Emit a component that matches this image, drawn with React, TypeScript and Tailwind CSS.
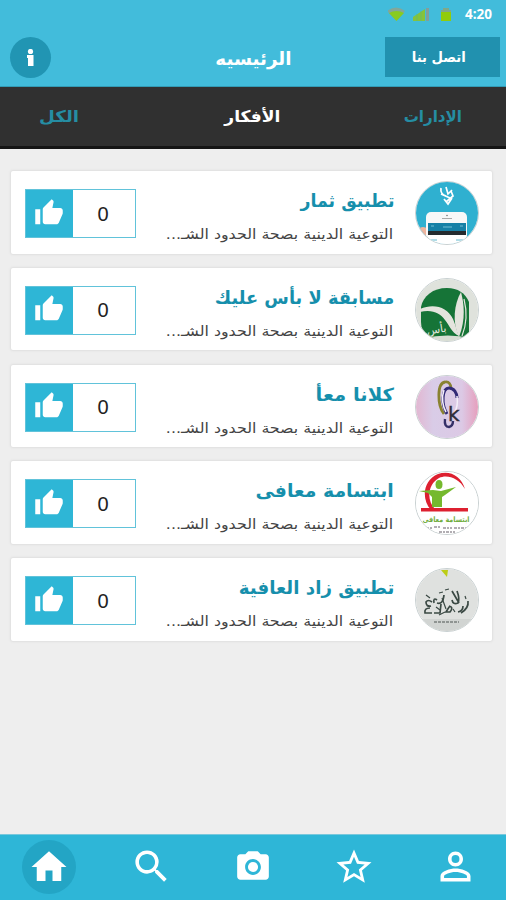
import type { ReactNode } from 'react'
import { MdHome, MdPersonOutline, MdPhotoCamera, MdSearch, MdThumbUp } from 'react-icons/md'

interface Idea {
  title: string
  titleClass: string
  votes: number
  logo: ReactNode
}

const SUMMARY = 'التوعية الدينية بصحة الحدود الشـ...'

function PhoneLogo() {
  return (
    <svg viewBox="0 0 64 64" className="size-16">
      <rect width="64" height="64" fill="#2fb0d0" />
      <path d="M27 6q-1 6 5 8M32 5l2 7 4-4M27 12l9 4M37 9l2 5-7 6M30 17l4 5 4-6" fill="none" stroke="#fff" strokeWidth="1.7" />
      <path d="M4 47q5-4 10 0v14H7z" fill="#eeb49d" />
      <rect x="12" y="30" width="41" height="40" rx="5" fill="#f8f8f8" />
      <path d="M28 36.500h10" stroke="#aaa" strokeWidth="1.200" />
      <circle cx="33" cy="33.500" r=".8" fill="#777" />
      <rect x="14" y="41" width="38" height="8" fill="#1680a6" />
      <rect x="14" y="49" width="38" height="4" fill="#242b2f" />
      <path d="M29 45h9M46 44h3M17 44h3" stroke="#70bed5" />
      <rect x="14" y="53" width="38" height="12" fill="#fff" />
      <path d="M17 58h6M42 58h7" stroke="#62b9ce" />
    </svg>
  )
}

function LeafLogo() {
  return (
    <svg viewBox="0 0 64 64" className="size-16">
      <rect width="64" height="64" fill="#dfe2dc" />
      <path d="M7 28C9 17 19 9 33 9c11 0 18 5 22 14v36H15Q7 54 7 43z" fill="#167437" />
      <path d="M6 30c14-6 27-2 33 10 3 7 4 13 6 17-8-4-9-10-14-16C26 34 18 30 6 33z" fill="#e4e4dd" />
      <path d="M45 58c-7-14-5-33 2-45 3 12 5 27-2 45z" fill="#e4e4dd" />
      <path d="M50 20q5 20-2 37" fill="none" stroke="#e4e4dd" strokeWidth="1.2" />
      <path d="M9 59q26-5 47 0v5H9z" fill="#d8ddd3" />
      <text x="23" y="54" fill="#e5e8df" fontSize="11" textAnchor="middle" direction="rtl" transform="rotate(-8 23 54)">بأس</text>
    </svg>
  )
}

function LoopLogo() {
  return (
    <svg viewBox="0 0 64 64" className="size-16">
      <defs>
        <linearGradient id="pinkShade">
          <stop offset="0" stopColor="#e3b5cf" />
          <stop offset=".3" stopColor="#d9cce7" />
          <stop offset=".75" stopColor="#dcc9e5" />
          <stop offset="1" stopColor="#e69fbd" />
        </linearGradient>
      </defs>
      <rect width="64" height="64" fill="url(#pinkShade)" />
      <path d="M30 38C23 29 23 7 31 6c4-1 6 3 6 6" fill="none" stroke="#898231" strokeWidth="2.8" />
      <path d="M33 38C27 28 28 12 35 12c5 0 8 5 8 10" fill="none" stroke="#332b76" strokeWidth="3" />
      <path d="M43 20c1 7 0 13-3 17M30 14c-3 8-1 17 2 22" fill="none" stroke="#f4eff9" strokeWidth="1.5" />
      <path d="M31 43q-1 8 4 8 4-1 4-6" fill="none" stroke="#342f67" strokeWidth="2.4" />
      <text x="34" y="45" direction="ltr" fontSize="20" fill="#302d3b" stroke="#302d3b" strokeWidth=".4">k</text>
    </svg>
  )
}

function SmileLogo() {
  return (
    <svg viewBox="0 0 64 64" className="size-16">
      <rect width="64" height="64" fill="#fff" />
      <path d="M17 38C7 27 9 8 24 2c12-4 23 2 27 15C45 6 33 2 25 6 14 12 12 28 21 37z" fill="#dd2030" />
      <rect x="7" y="36" width="47" height="3.5" fill="#dd2030" />
      <ellipse cx="25" cy="12.500" rx="3.500" ry="4.500" fill="#75b92e" />
      <path d="M5 19l14-1 8 1 15-4-11 8-3 2v10H18V25l-4-4z" fill="#75b92e" />
      <text x="32" y="50" textAnchor="middle" direction="rtl" fontSize="7.500" fontWeight="700" fill="#71ad3f" textLength="47" lengthAdjust="spacingAndGlyphs">ابتسامة معافى</text>
      <path d="M9 56h9m2-1h7m2 1h9m2 0h15M25 60h16" stroke="#99949a" strokeWidth="1.600" strokeDasharray="3 1 2 1" />
    </svg>
  )
}

function CalligraphyLogo() {
  return (
    <svg viewBox="0 0 64 64" className="size-16">
      <rect width="64" height="64" fill="#dfe1df" />
      <path d="M0 50h64v14H0z" fill="#d1d4d2" />
      <path d="M27 1h7l-1 7z" fill="#bccd16" />
      <g fill="none" stroke="#3b4944" strokeWidth="1.7">
        <path d="M54 32q1 7-7 12M49 37q0 5-5 6M43 22q3 8 1 12-5 2-6-3M38 22l7 12M35 37q5 1 1 6h-4q3-5 4-6M30 26q-1 10-7 8M27 35l-1 9h-6M23 31q-4-3-3 3M18 33q-4-3-6 0 0 5 5 4M16 39q-6 0-5 5h7" />
        <path d="M31 21l4-1M25 24l4-1M12 26l4 3M39 40l2 3M51 27l1 3M28 29l4 11M31 43l-6 3M22 38l4 3" strokeWidth="1.2" />
      </g>
      <path d="M20 53h25" stroke="#8f9492" strokeWidth="2" strokeDasharray="3 1" />
    </svg>
  )
}

const ideas: Idea[] = [
  { title: 'تطبيق ثمار', titleClass: 'scale-x-[0.965]', votes: 0, logo: <PhoneLogo /> },
  { title: 'مسابقة لا بأس عليك', titleClass: 'scale-x-[0.99]', votes: 0, logo: <LeafLogo /> },
  { title: 'كلانا معأ', titleClass: 'scale-x-[1.09]', votes: 0, logo: <LoopLogo /> },
  { title: 'ابتسامة معافى', titleClass: 'scale-x-[1.05]', votes: 0, logo: <SmileLogo /> },
  { title: 'تطبيق زاد العافية', titleClass: 'scale-x-[1.015]', votes: 0, logo: <CalligraphyLogo /> },
]

function StatusBar() {
  return (
    <div className="flex h-[30px] items-center justify-end pr-[14px]">
      <svg viewBox="0 0 66 16" className="mr-[11px] h-4 w-[66px]">
        <path d="M-1 4q9.500-7 18 0L8.500 14z" fill="#82a79a" />
        <path d="M1 6q7.500-4 15 0l-7.500 8z" fill="#88cb20" />
        <path d="M25 14V10l12-8v12z" fill="#86c33b" />
        <path d="M38 1h3v13h-3z" fill="#829e9c" />
        <path d="M29 7v7m4-10v10" stroke="#5ab879" strokeWidth=".6" />
        <path d="M53 3h2V1h6v2h2v11H53z" fill="#80a888" />
        <path d="M53 5h10v9H53z" fill="#91cc0b" />
      </svg>
      <span className="font-['Open_Sans'] text-[13.500px] font-bold leading-none text-white">4:20</span>
    </div>
  )
}

function Header() {
  return (
    <header className="h-[87px] border-b border-[#329bb5] bg-[#42bcdb] text-white">
      <StatusBar />
      <div className="grid grid-cols-[1fr_120px_1fr] items-center pt-[7px]">
        <button className="ml-[10px] flex size-[41px] items-center justify-center rounded-full bg-[#2195b3]">
          <svg viewBox="0 0 8 18" className="mr-[2px] h-[18px] w-2" fill="currentColor">
            <circle cx="4.500" cy="2.500" r="2.600" />
            <path d="M1 6h6.500v11H2V9H1z" />
          </svg>
        </button>
        <h1 className="pb-[1px] pl-[1px] pt-1 text-center text-[18px] font-bold leading-6">
          <span className="inline-block scale-x-[1.02]">الرئيسيه</span>
        </h1>
        <button className="mb-[1px] mr-[6px] flex h-10 w-[115px] items-center justify-center justify-self-end bg-[#2191af] pr-[7px] text-[14px] font-bold">
          <span className="inline-block scale-x-[0.94]">اتصل بنا</span>
        </button>
      </div>
    </header>
  )
}

function Tabs() {
  return (
    <nav
      dir="rtl"
      className="grid h-[62px] grid-cols-3 items-center border-b-[3px] border-[#151515] bg-[#303030] pl-[39px] pr-[44px] text-[16px] font-bold text-[#258da3]"
    >
      <button className="origin-right scale-x-[0.94] justify-self-start">الإدارات</button>
      <button className="scale-x-[1.07] justify-self-center pl-[3px] text-white">الأفكار</button>
      <button className="origin-left scale-x-[1.14] justify-self-end">الكل</button>
    </nav>
  )
}

function IdeaCard({ title, titleClass, votes, logo }: Idea) {
  return (
    <article className="flex h-[82.500px] items-start rounded-[2px] bg-white pl-[14px] pr-[13px] shadow-[0_0_2px_1px_#dfdfdf]">
      <div className="mt-[10px] size-16 shrink-0 overflow-hidden rounded-full border border-[#c8d0d1]">{logo}</div>
      <div className="mr-[21px] flex h-full flex-1 flex-col items-start whitespace-nowrap pt-[16px]">
        <h2 className={`origin-right text-[18px] font-bold leading-[28px] text-[#168fac] ${titleClass}`}>{title}</h2>
        <p className="mr-[1px] mt-[7px] origin-right scale-x-[1.13] text-[14px] leading-[24px] text-[#444]">{SUMMARY}</p>
      </div>
      <button dir="ltr" className="mt-[18px] flex h-[49px] w-[111px] shrink-0 border border-[#61c3da]">
        <span className="flex h-full w-[47px] items-center justify-center bg-[#2eb6d6] pb-[2px] pr-[2px] text-white">
          <MdThumbUp size={30} />
        </span>
        <span className="flex h-full flex-1 items-center justify-center pr-[2px] font-['Liberation_Sans'] text-[20px] text-[#222]">
          {votes}
        </span>
      </button>
    </article>
  )
}

function BottomNav() {
  return (
    <nav className="grid h-[66px] grid-cols-5 items-center justify-items-center border-t border-[#79c8dc] bg-[#2eb6d7] pb-[2px] text-white">
      <span className="mr-[3px] flex size-[54px] items-center justify-center rounded-full bg-[#23a5c5]">
        <MdHome size={42} />
      </span>
      <MdSearch size={43} />
      <MdPhotoCamera size={38} />
      <svg viewBox="0 0 24 24" className="size-[42px]" fill="currentColor">
        <path d="M22 9.240l-7.190-.62L12 2 9.190 8.630 2 9.240l5.460 4.730L5.820 21 12 17.270 18.180 21l-1.630-7.030L22 9.240zM12 15.400l-3.760 2.270 1-4.280-3.320-2.880 4.380-.38L12 6.100l1.710 4.040 4.380.38-3.320 2.880 1 4.280L12 15.400z" />
      </svg>
      <MdPersonOutline size={45} />
    </nav>
  )
}

export default function App() {
  return (
    <div className="flex h-[900px] w-[506px] flex-col overflow-hidden bg-[#eee] font-['DejaVu_Sans',sans-serif]">
      <Header />
      <Tabs />
      <main dir="rtl" className="flex flex-1 flex-col gap-[14.300px] pl-[11px] pr-[14px] pt-[22px]">
        {ideas.map((idea) => (
          <IdeaCard key={idea.title} {...idea} />
        ))}
      </main>
      <BottomNav />
    </div>
  )
}
